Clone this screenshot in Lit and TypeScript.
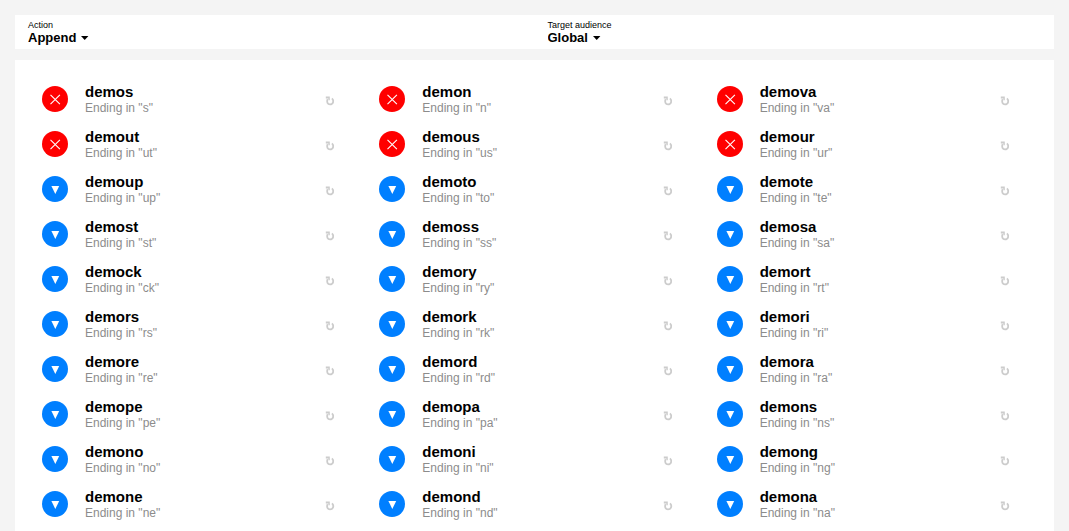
import { LitElement, html, svg, css } from "lit";
import { customElement, property } from "lit/decorators.js";
import { classMap } from "lit/directives/class-map.js";

const SUFFIXES = [
  "s", "n", "va",
  "ut", "us", "ur",
  "up", "to", "te",
  "st", "ss", "sa",
  "ck", "ry", "rt",
  "rs", "rk", "ri",
  "re", "rd", "ra",
  "pe", "pa", "ns",
  "no", "ni", "ng",
  "ne", "nd", "na",
];
const TAKEN_COUNT = 6;

@customElement("filter-select")
export class FilterSelect extends LitElement {
  @property() label = "";
  @property() value = "";

  static styles = css`
    :host {
      display: block;
      padding: 5px 13px 3px;
    }
    .label {
      display: block;
      font-size: 9px;
      line-height: 10px;
    }
    .control {
      display: flex;
      align-items: center;
      gap: 4px;
    }
    .select {
      appearance: none;
      border: 0;
      padding: 0;
      margin: 0;
      background: none;
      color: inherit;
      font: bold 13px/16px "Liberation Sans", Arial, sans-serif;
      cursor: pointer;
    }
    .caret {
      width: 8px;
      height: 4px;
      pointer-events: none;
    }
  `;

  render() {
    return html`
      <label class="label" for="field">${this.label}</label>
      <span class="control">
        <select class="select" id="field">
          <option>${this.value}</option>
        </select>
        <svg class="caret" viewBox="0 0 8 4" aria-hidden="true">
          <path d="M0 0h7.4L3.7 4z" fill="currentColor" />
        </svg>
      </span>
    `;
  }
}

@customElement("name-item")
export class NameItem extends LitElement {
  @property() name = "";
  @property() suffix = "";
  @property({ type: Boolean }) taken = false;

  static styles = css`
    :host {
      display: flex;
      align-items: center;
      height: 45px;
      padding: 0 30px 0 14px;
      box-sizing: border-box;
    }
    .status {
      flex: none;
      width: 26px;
      height: 26px;
      margin-right: 17px;
      border-radius: 50%;
      background: #007fff;
    }
    .status.taken {
      background: #ff0000;
    }
    .text {
      flex: 1;
      min-width: 0;
      padding-top: 2px;
    }
    .name {
      font-size: 15px;
      line-height: 16px;
      font-weight: bold;
    }
    .hint {
      font-size: 12px;
      line-height: 16px;
      color: #8c8c8c;
    }
    .refresh {
      flex: none;
      border: 0;
      padding: 4px 0 0;
      margin: 0;
      background: none;
      color: #cccccc;
      cursor: pointer;
    }
    .icon {
      display: block;
    }
  `;

  render() {
    const mark = this.taken
      ? svg`<path d="M8.5 8.8l9.4 9.4M17.9 8.8l-9.4 9.4" stroke="#fff" stroke-width="1.1" fill="none" />`
      : svg`<path d="M9.4 10h7.8L13.3 18z" fill="#fff" />`;
    return html`
      <span
        class=${classMap({ status: true, taken: this.taken })}
        role="img"
        aria-label=${this.taken ? "Taken" : "Available"}
      >
        <svg class="icon" width="26" height="26" viewBox="0 0 26 26">${mark}</svg>
      </span>
      <div class="text">
        <div class="name">${this.name}</div>
        <div class="hint">Ending in "${this.suffix}"</div>
      </div>
      <button class="refresh" type="button" aria-label="Refresh ${this.name}">
        <svg class="icon" width="10" height="10" viewBox="0 0 10 10">
          <path
            d="M2.6 3.2C1.4 6 2.6 8.4 5 8.4C8.2 8.4 9.4 4.6 7 2.3"
            fill="none"
            stroke="currentColor"
            stroke-width="1.8"
          />
          <path d="M0.8 0.6h4v3.6H3.4V2.4H0.8z" fill="currentColor" />
        </svg>
      </button>
    `;
  }
}

@customElement("app-root")
export class AppRoot extends LitElement {
  static styles = css`
    :host {
      display: block;
      min-height: 100vh;
      box-sizing: border-box;
      padding: 15px 15px 0;
      background: #f4f4f4;
      color: #000;
      font-family: "Liberation Sans", Arial, sans-serif;
    }
    .filters {
      display: grid;
      grid-template-columns: 1fr 1fr;
      margin-bottom: 11px;
      background: #fff;
    }
    .results {
      display: grid;
      grid-template-columns: repeat(3, 1fr);
      padding: 16px 14px 5px 13px;
      background: #fff;
    }
  `;

  render() {
    return html`
      <div class="filters">
        <filter-select label="Action" value="Append"></filter-select>
        <filter-select label="Target audience" value="Global"></filter-select>
      </div>
      <main class="results">
        ${SUFFIXES.map(
          (suffix, i) => html`
            <name-item
              .name=${"demo" + suffix}
              .suffix=${suffix}
              .taken=${i < TAKEN_COUNT}
            ></name-item>
          `
        )}
      </main>
    `;
  }
}
